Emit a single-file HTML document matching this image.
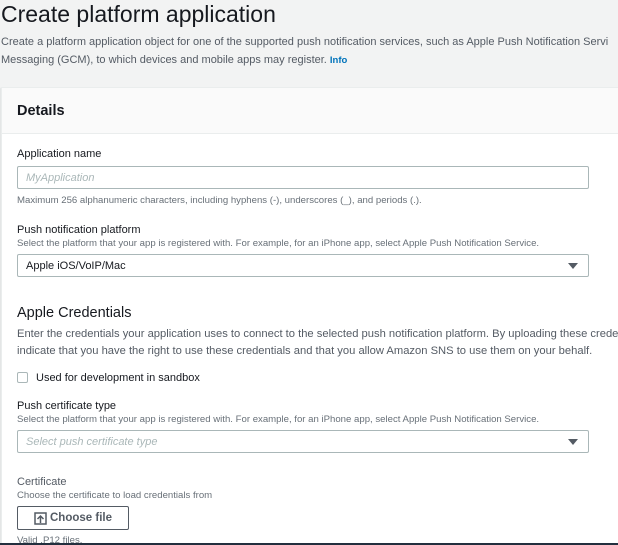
<!DOCTYPE html>
<html><head><meta charset="utf-8"><style>
*{box-sizing:border-box;margin:0;padding:0}
html,body{width:618px;height:545px;overflow:hidden}
body{background:#f2f3f3;font-family:"Liberation Sans",sans-serif;color:#16191f;position:relative}
.t{position:absolute;white-space:nowrap}
h1{position:absolute;left:1px;top:0;font-size:23px;font-weight:400;line-height:28px}
.sub{font-size:11px;color:#545b64;line-height:18px;left:1px;top:33px}
.info{color:#0073bb;font-weight:bold;font-size:9.5px}
.card{position:absolute;left:1px;top:87px;width:640px;height:470px;background:#fff;border:1px solid #eaeded;box-shadow:0 1px 1px rgba(0,28,36,.3)}
.hdr{position:absolute;left:0;top:0;width:100%;height:46px;background:#fafafa;border-bottom:1px solid #eaeded}
.lbl{font-size:11px;color:#16191f}
.desc{font-size:9.6px;color:#687078}
.inp{position:absolute;left:17px;width:572px;height:23px;border:1px solid #aab7b8;border-radius:2px;background:#fff;font-size:11px;padding:5px 8px}
.ph{color:#aab7b8;font-style:italic}
.arr{position:absolute;right:10px;top:8px;width:0;height:0;border-left:5px solid transparent;border-right:5px solid transparent;border-top:6px solid #545b64}
.bottom{position:absolute;left:0;top:543px;width:618px;height:2px;background:#232f3e}
</style></head><body>
<h1>Create platform application</h1>
<div class="t sub">Create a platform application object for one of the supported push notification services, such as Apple Push Notification Servi<br>Messaging (GCM), to which devices and mobile apps may register. <span class="info">Info</span></div>
<div class="card"><div class="hdr"></div></div>
<div class="t" style="left:17px;top:103px;font-size:14.5px;font-weight:bold">Details</div>
<div class="t lbl" style="left:17px;top:148px">Application name</div>
<div class="inp" style="top:166px"><span class="ph">MyApplication</span></div>
<div class="t desc" style="left:17px;top:195px">Maximum 256 alphanumeric characters, including hyphens (-), underscores (_), and periods (.).</div>
<div class="t lbl" style="left:17px;top:224px">Push notification platform</div>
<div class="t desc" style="left:17px;top:238px">Select the platform that your app is registered with. For example, for an iPhone app, select Apple Push Notification Service.</div>
<div class="inp" style="top:254px">Apple iOS/VoIP/Mac<div class="arr"></div></div>
<div class="t" style="left:17px;top:305px;font-size:14.5px">Apple Credentials</div>
<div class="t" style="left:17px;top:326px;font-size:11.2px;color:#545b64;line-height:17px">Enter the credentials your application uses to connect to the selected push notification platform. By uploading these crede<br>indicate that you have the right to use these credentials and that you allow Amazon SNS to use them on your behalf.</div>
<div style="position:absolute;left:17px;top:372px;width:11px;height:11px;border:1px solid #aab7b8;border-radius:2px;background:#fff"></div>
<div class="t lbl" style="left:36px;top:372px">Used for development in sandbox</div>
<div class="t lbl" style="left:17px;top:400px">Push certificate type</div>
<div class="t desc" style="left:17px;top:414px">Select the platform that your app is registered with. For example, for an iPhone app, select Apple Push Notification Service.</div>
<div class="inp" style="top:430px"><span class="ph">Select push certificate type</span><div class="arr"></div></div>
<div class="t lbl" style="left:17px;top:476px;color:#545b64">Certificate</div>
<div class="t desc" style="left:17px;top:490px">Choose the certificate to load credentials from</div>
<div style="position:absolute;left:17px;top:506px;width:112px;height:24px;border:1px solid #545b64;border-radius:2px;background:#fff;font-size:11.5px;font-weight:bold;color:#545b64;padding:5px 0 0 16px">
<svg width="13" height="13" viewBox="0 0 13 13" style="position:absolute;left:16px;top:5px"><rect x="1" y="1" width="11" height="11" fill="none" stroke="#545b64" stroke-width="1.5"/><path d="M6.5 11V4M3.5 7l3-3 3 3" fill="none" stroke="#545b64" stroke-width="1.5"/></svg>
<span style="margin-left:16px">Choose file</span></div>
<div class="t desc" style="left:17px;top:535px">Valid .P12 files.</div>
<div class="bottom"></div>
</body></html>
